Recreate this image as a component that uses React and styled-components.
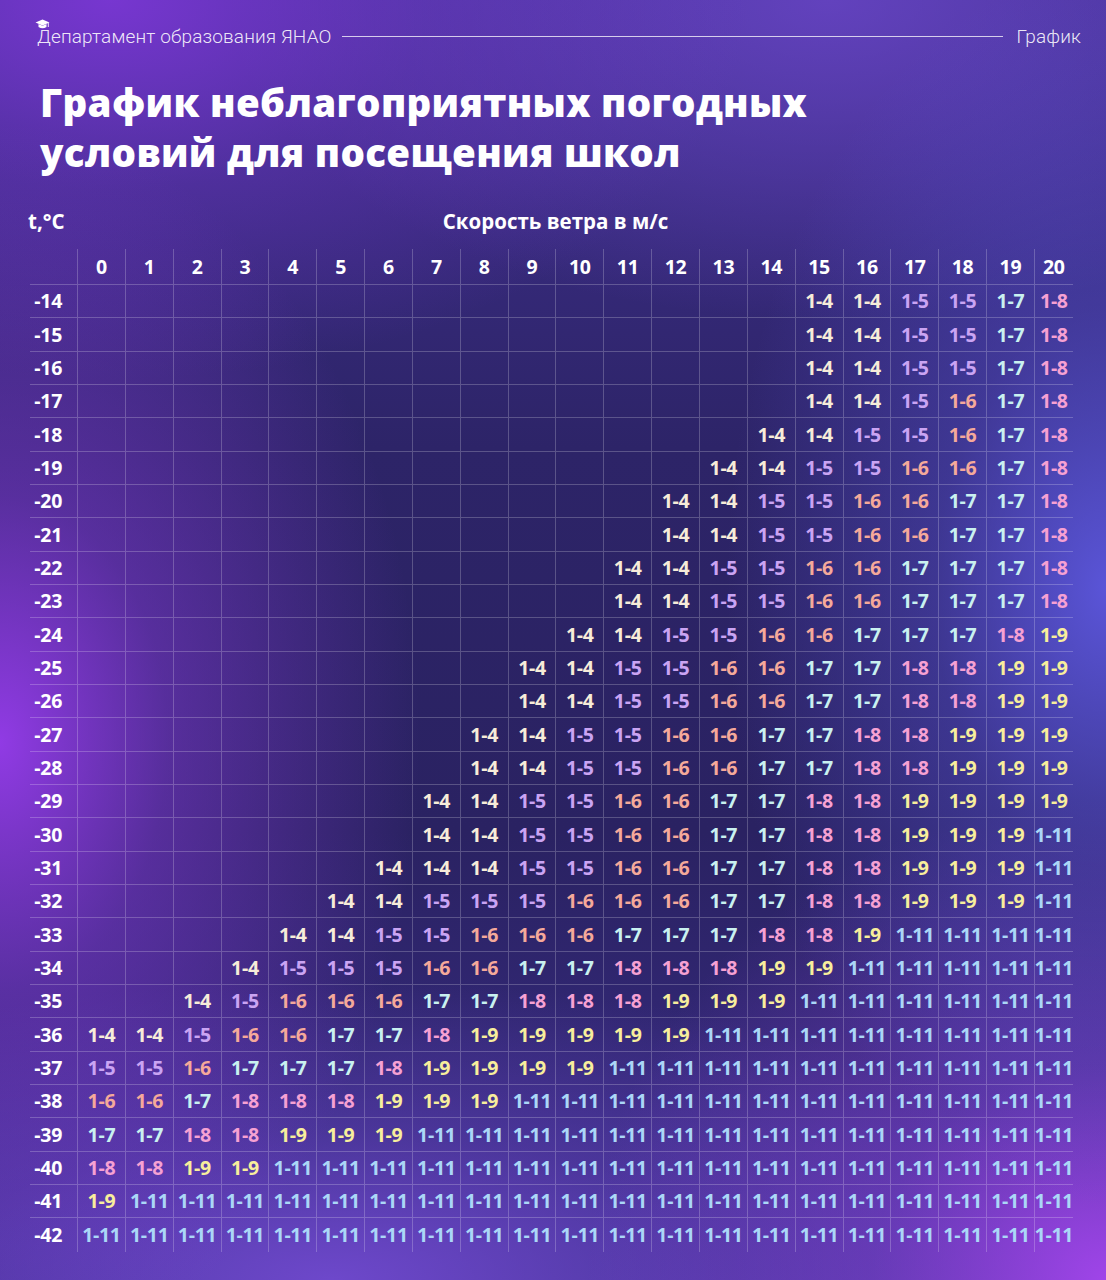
import React from 'react';
import styled, { createGlobalStyle } from 'styled-components';

const Global = createGlobalStyle`
  html, body { margin: 0; padding: 0; }
  body { background: #2c2468; }
  * { box-sizing: border-box; }
`;

const Page = styled.div`
  position: relative;
  width: 1106px;
  height: 1280px;
  overflow: hidden;
  color: #fff;
  font-family: "Open Sans", "Noto Sans", sans-serif;
  background:
    radial-gradient(ellipse 420px 620px at 0% 58%, rgba(150, 60, 235, 0.95) 0%, rgba(140, 60, 225, 0.45) 40%, rgba(140, 60, 225, 0) 100%),
    radial-gradient(ellipse 380px 620px at 100% 46%, rgba(95, 90, 228, 0.9) 0%, rgba(95, 90, 228, 0.35) 45%, rgba(95, 90, 228, 0) 100%),
    radial-gradient(ellipse 520px 480px at 100% 100%, rgba(165, 70, 238, 0.95) 0%, rgba(150, 70, 230, 0.4) 45%, rgba(150, 70, 230, 0) 100%),
    radial-gradient(ellipse 640px 380px at 10% 0%, rgba(125, 55, 215, 0.9) 0%, rgba(120, 55, 210, 0.35) 50%, rgba(120, 55, 210, 0) 100%),
    radial-gradient(ellipse 600px 320px at 75% 0%, rgba(110, 72, 205, 0.75) 0%, rgba(105, 70, 200, 0) 100%),
    radial-gradient(ellipse 800px 300px at 30% 100%, rgba(115, 75, 210, 0.9) 0%, rgba(115, 75, 210, 0.35) 50%, rgba(115, 75, 210, 0) 100%),
    linear-gradient(180deg, #40308f 0%, #2d2468 35%, #2a2262 65%, #3a2d88 100%);
  padding: 24px 25px 0 30px;
`;

const TopBar = styled.div`
  display: flex;
  align-items: center;
  gap: 10px;
  height: 24px;
  padding-left: 7px;
  font-family: Roboto, "Noto Sans", sans-serif;
  font-weight: 300;
  font-size: 19px;
  letter-spacing: 0.15px;
  color: rgba(255, 255, 255, 0.9);
`;

const Brand = styled.span`
  position: relative;
  white-space: nowrap;
`;

const Cap = styled.svg`
  position: absolute;
  left: -2px;
  top: -6px;
  width: 15px;
  height: 11px;
`;

const Rule = styled.div`
  flex: 1;
  height: 1px;
  background: rgba(255, 255, 255, 0.75);
`;

const Section = styled.span`
  white-space: nowrap;
  padding-left: 3px;
`;

const Title = styled.h1`
  margin: 29px 0 0 10px;
  font-family: "Open Sans", "Noto Sans", sans-serif;
  font-weight: 800;
  font-size: 38.5px;
  line-height: 50px;
  letter-spacing: 0.3px;
  color: #fff;
`;

const AxisRow = styled.div`
  position: relative;
  display: flex;
  align-items: center;
  height: 26px;
  margin-top: 31px;
  font-weight: 700;
  font-size: 20.5px;
`;

const TempLabel = styled.span`
  width: 120px;
  margin-left: -2px;
`;

const WindLabel = styled.span`
  position: absolute;
  left: 0;
  right: 0;
  text-align: center;
  pointer-events: none;
`;

const Grid = styled.div`
  display: grid;
  grid-template-columns: 47px repeat(20, 47.85px) 39px;
  grid-template-rows: 36px repeat(29, 33.33px);
  width: 1043px;
  margin-top: 15px;
`;

const Cell = styled.div`
  display: flex;
  align-items: center;
  justify-content: ${p => (p.$label ? 'flex-end' : 'center')};
  padding-right: ${p => (p.$label ? '15px' : '0')};
  border-left: ${p => (p.$label ? 'none' : '1px solid rgba(255, 255, 255, 0.22)')};
  border-bottom: ${p => (p.$last ? 'none' : '1px solid rgba(255, 255, 255, 0.22)')};
  font-weight: 700;
  font-size: 19.5px;
  letter-spacing: -0.3px;
  line-height: 1;
  color: ${p => p.$color || '#fff'};
  white-space: nowrap;
`;

const HeadCell = styled(Cell)`
  padding-top: 1px;
`;

const COLORS = {
  '4': '#f7ecd9',
  '5': '#caa4f3',
  '6': '#f5a99a',
  '7': '#c9f1f0',
  '8': '#f6a1d3',
  '9': '#f8ee9c',
  '11': '#abd7f7',
};

const SPEC = [
  [-14, 15, '4 4 5 5 7 8'],
  [-15, 15, '4 4 5 5 7 8'],
  [-16, 15, '4 4 5 5 7 8'],
  [-17, 15, '4 4 5 6 7 8'],
  [-18, 14, '4 4 5 5 6 7 8'],
  [-19, 13, '4 4 5 5 6 6 7 8'],
  [-20, 12, '4 4 5 5 6 6 7 7 8'],
  [-21, 12, '4 4 5 5 6 6 7 7 8'],
  [-22, 11, '4 4 5 5 6 6 7 7 7 8'],
  [-23, 11, '4 4 5 5 6 6 7 7 7 8'],
  [-24, 10, '4 4 5 5 6 6 7 7 7 8 9'],
  [-25, 9, '4 4 5 5 6 6 7 7 8 8 9 9'],
  [-26, 9, '4 4 5 5 6 6 7 7 8 8 9 9'],
  [-27, 8, '4 4 5 5 6 6 7 7 8 8 9 9 9'],
  [-28, 8, '4 4 5 5 6 6 7 7 8 8 9 9 9'],
  [-29, 7, '4 4 5 5 6 6 7 7 8 8 9 9 9 9'],
  [-30, 7, '4 4 5 5 6 6 7 7 8 8 9 9 9 11'],
  [-31, 6, '4 4 4 5 5 6 6 7 7 8 8 9 9 9 11'],
  [-32, 5, '4 4 5 5 5 6 6 6 7 7 8 8 9 9 9 11'],
  [-33, 4, '4 4 5 5 6 6 6 7 7 7 8 8 9'],
  [-34, 3, '4 5 5 5 6 6 7 7 8 8 8 9 9'],
  [-35, 2, '4 5 6 6 6 7 7 8 8 8 9 9 9'],
  [-36, 0, '4 4 5 6 6 7 7 8 9 9 9 9 9'],
  [-37, 0, '5 5 6 7 7 7 8 9 9 9 9'],
  [-38, 0, '6 6 7 8 8 8 9 9 9'],
  [-39, 0, '7 7 8 8 9 9 9'],
  [-40, 0, '8 8 9 9'],
  [-41, 0, '9'],
  [-42, 0, ''],
];

const ROWS = SPEC.map(([t, start, seq]) => {
  const vals = seq ? seq.split(' ') : [];
  const cells = [];
  for (let c = 0; c <= 20; c++) {
    if (c < start) cells.push(null);
    else {
      const v = vals[c - start];
      cells.push(v === undefined ? '11' : v);
    }
  }
  return { t, cells };
});

const SPEEDS = Array.from({ length: 21 }, (_, i) => i);

export default function App() {
  return (
    <>
      <Global />
      <Page>
        <TopBar>
          <Brand>
            <Cap viewBox="0 0 15 11">
              <path d="M7.5 0.5 L14.5 3.5 L7.5 6.5 L0.5 3.5 Z" fill="#fff" />
              <path d="M3.5 5 L3.5 8 Q7.5 10.5 11.5 8 L11.5 5 L7.5 6.8 Z" fill="#fff" />
              <path d="M13.3 4 L13.3 8" stroke="#fff" strokeWidth="0.9" />
            </Cap>
            Департамент образования ЯНАО
          </Brand>
          <Rule />
          <Section>График</Section>
        </TopBar>
        <Title>
          График неблагоприятных погодных
          <br />
          условий для посещения школ
        </Title>
        <AxisRow>
          <TempLabel>t,°C</TempLabel>
          <WindLabel>Скорость ветра в м/с</WindLabel>
        </AxisRow>
        <Grid>
          <HeadCell $label />
          {SPEEDS.map(s => (
            <HeadCell key={s}>{s}</HeadCell>
          ))}
          {ROWS.map((row, ri) => {
            const last = ri === ROWS.length - 1;
            return (
              <React.Fragment key={row.t}>
                <Cell $label $last={last}>{row.t}</Cell>
                {row.cells.map((v, ci) => (
                  <Cell key={ci} $last={last} $color={v ? COLORS[v] : undefined}>
                    {v ? `1-${v}` : ''}
                  </Cell>
                ))}
              </React.Fragment>
            );
          })}
        </Grid>
      </Page>
    </>
  );
}
